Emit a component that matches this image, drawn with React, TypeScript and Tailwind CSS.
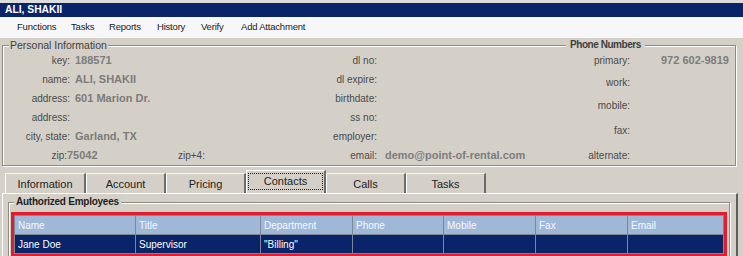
import React from "react";

const groupBorder =
  "border border-[#8e8b85] shadow-[inset_1px_1px_0_#ffffff,1px_1px_0_#ffffff]";

function LRow({ label, value }: { label: string; value?: string }) {
  return (
    <div className="h-[19px] flex items-center">
      <div className="w-[67px] text-right text-[10px] text-[#4a4a4a]">{label}</div>
      {value ? (
        <div className="ml-[5px] text-[11px] font-bold text-[#7c7c7c] whitespace-nowrap">{value}</div>
      ) : null}
    </div>
  );
}

function MRow({ label, value }: { label: string; value?: string }) {
  return (
    <div className="h-[19px] flex items-center">
      <div className="w-[127px] text-right text-[10px] text-[#4a4a4a]">{label}</div>
      {value ? (
        <div className="ml-[8px] text-[11px] font-bold text-[#7c7c7c] whitespace-nowrap">{value}</div>
      ) : null}
    </div>
  );
}

function RRow({ label, value, h }: { label: string; value?: string; h: string }) {
  return (
    <div className={`${h} flex items-center`}>
      <div className="w-[100px] text-right text-[10px] text-[#4a4a4a]">{label}</div>
      {value ? (
        <div className="ml-[31px] text-[11px] font-bold text-[#7c7c7c] whitespace-nowrap">{value}</div>
      ) : null}
    </div>
  );
}

const tabs = ["Information", "Account", "Pricing", "Contacts", "Calls", "Tasks"];

const cols = ["Name", "Title", "Department", "Phone", "Mobile", "Fax", "Email"];
const row = ["Jane Doe", "Supervisor", "\"Billing\"", "", "", "", ""];

export default function App() {
  return (
    <div className="w-[743px] h-[256px] overflow-hidden bg-[#d4d0c8] font-['Liberation_Sans',Arial,sans-serif]">
      {/* Title bar */}
      <div className="h-[17px] bg-[#dcdcdc] pt-[3px]">
        <div className="h-[14px] bg-[#0a246a] flex items-center pl-[5px] text-white font-bold text-[10.3px]">
          ALI, SHAKII
        </div>
      </div>
      {/* Menu bar */}
      <div className="h-[21px] bg-[#f7f7fa] flex items-center pl-[17px] text-[9.5px] tracking-[-0.2px] text-[#1a1a1a]">
        <span className="w-[54px]">Functions</span>
        <span className="w-[38px]">Tasks</span>
        <span className="w-[48px]">Reports</span>
        <span className="w-[44px]">History</span>
        <span className="w-[40px]">Verify</span>
        <span>Add Attachment</span>
      </div>

      {/* Personal Information group */}
      <div className={`mt-[7px] ml-[2px] w-[734px] h-[121px] relative ${groupBorder}`}>
        <div className="absolute left-[6px] top-[-8px] leading-[14px] px-[1px] bg-[#d4d0c8] text-[10.5px] text-[#404040]">
          Personal Information
        </div>
        <div className="absolute left-[563px] top-[-8px] leading-[14px] px-[4px] bg-[#d4d0c8] text-[10px] font-bold tracking-[-0.45px] text-[#404040]">
          Phone Numbers
        </div>
        <div className="flex pt-[5px]">
          <div className="w-[247px] flex flex-col">
            <LRow label="key:" value="188571" />
            <LRow label="name:" value="ALI, SHAKII" />
            <LRow label="address:" value="601 Marion Dr." />
            <LRow label="address:" />
            <LRow label="city, state:" value="Garland, TX" />
            <div className="h-[19px] flex items-center">
              <div className="w-[64px] text-right text-[10px] text-[#4a4a4a]">zip:</div>
              <div className="w-[111px] text-[11px] font-bold text-[#7c7c7c]">75042</div>
              <div className="text-[10px] text-[#4a4a4a]">zip+4:</div>
            </div>
          </div>
          <div className="w-[280px] flex flex-col">
            <MRow label="dl no:" />
            <MRow label="dl expire:" />
            <MRow label="birthdate:" />
            <MRow label="ss no:" />
            <MRow label="employer:" />
            <MRow label="email:" value="demo@point-of-rental.com" />
          </div>
          <div className="flex-1 flex flex-col">
            <RRow h="h-[18px]" label="primary:" value="972 602-9819" />
            <RRow h="h-[26px]" label="work:" />
            <RRow h="h-[20px]" label="mobile:" />
            <RRow h="h-[30px]" label="fax:" />
            <RRow h="h-[20px]" label="alternate:" />
          </div>
        </div>
      </div>

      {/* Tabs */}
      <div className="mt-[4px] h-[23px] flex items-end pl-[5px]">
        {tabs.map((t, i) =>
          t === "Contacts" ? (
            <div
              key={t}
              className="w-[80px] h-[23px] border-t border-l border-t-[#ffffff] border-l-[#ffffff] border-r-2 border-r-[#6b6b6b] px-[1px] pt-[2px] pb-[3px]"
            >
              <div className="h-full border border-dotted border-[#202020] flex items-center justify-center text-[11px] text-[#222]">
                {t}
              </div>
            </div>
          ) : (
            <div
              key={t}
              className={`${i === 0 ? "w-[81px]" : "w-[80px]"} h-[20px] border-t border-l border-t-[#f4f4f4] border-l-[#ffffff] border-r-2 border-r-[#6b6b6b] flex items-center justify-center text-[11px] text-[#222] pt-[1px]`}
            >
              {t}
            </div>
          )
        )}
      </div>

      {/* Tab panel */}
      <div className="ml-[2px] w-[736px] h-[80px] border-t border-l border-t-[#ffffff] border-l-[#ffffff] border-r-2 border-r-[#5e5e5e]">
        <div className={`mt-[8px] ml-[5px] w-[722px] h-[80px] relative pt-[9px] ${groupBorder}`}>
          <div className="absolute left-[5px] top-[-8px] leading-[14px] px-[2px] bg-[#d4d0c8] text-[10px] font-bold tracking-[-0.25px] text-[#1e1e1e]">
            Authorized Employees
          </div>
          <div className="ml-[2px] w-[716px] border-[3px] border-[#e31b2a]">
            <div className="border border-[#7d8696] bg-[#7d8696] grid grid-cols-[120px_124px_91px_90px_91px_91px_1fr] gap-px">
              {cols.map((c) => (
                <div key={c} className="h-[18px] bg-[#a0b8d8] flex items-center pl-[3px] text-[10px] text-[#f6f8fb]">
                  {c}
                </div>
              ))}
              {row.map((c, i) => (
                <div key={i} className="h-[18px] bg-[#0a246a] flex items-center pl-[3px] text-[10px] text-white">
                  {c}
                </div>
              ))}
            </div>
          </div>
        </div>
      </div>
    </div>
  );
}
